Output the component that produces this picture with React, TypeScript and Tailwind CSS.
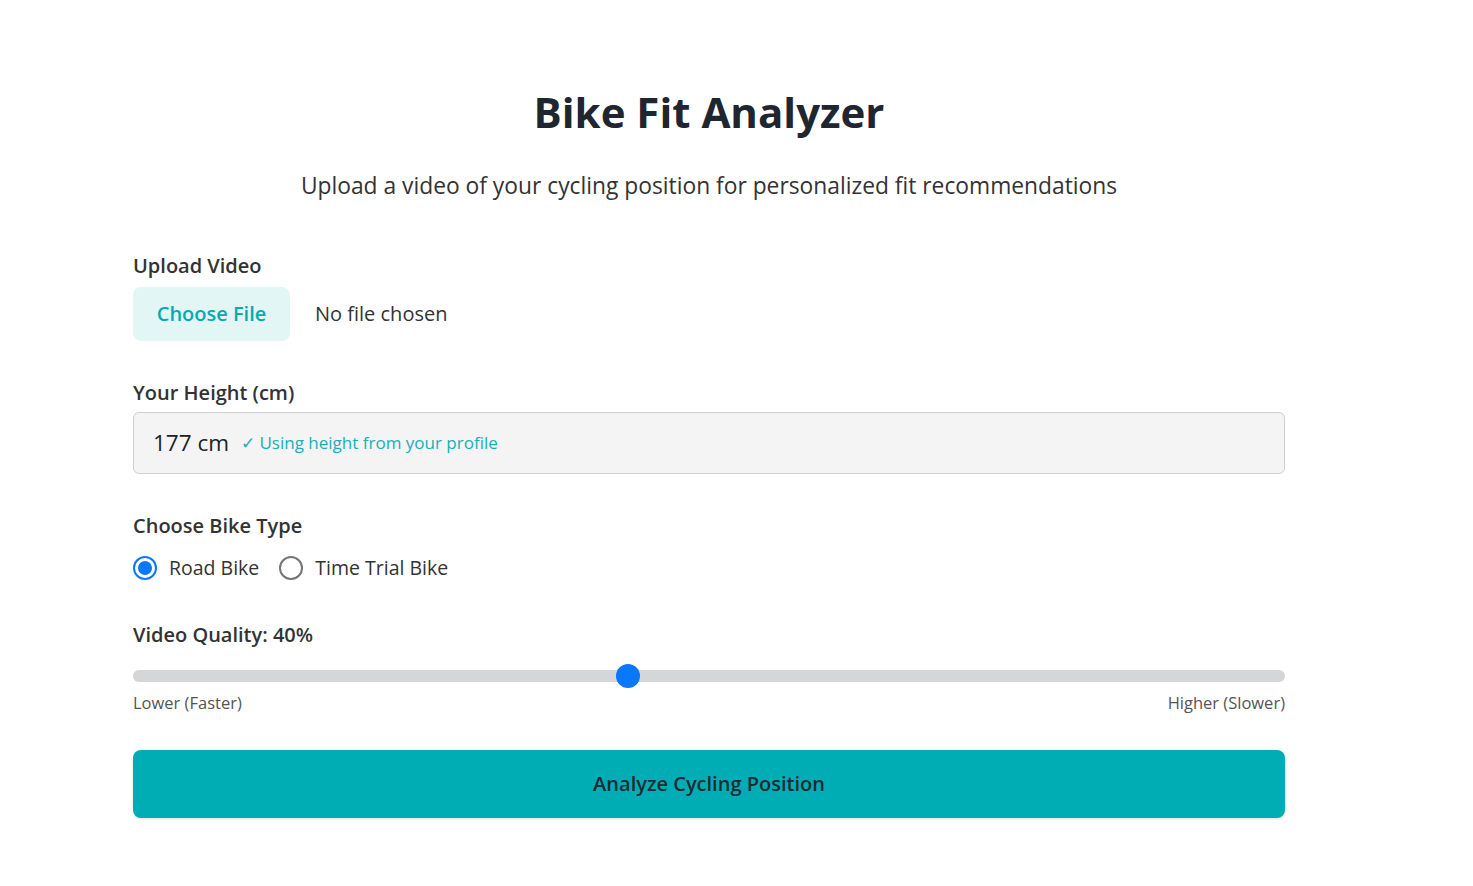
import { useState } from "react";

export default function App() {
  const [bike, setBike] = useState("road");
  const quality = 40;

  return (
    <div className="min-h-screen bg-white font-['Open_Sans',sans-serif] text-[#333]">
      <div className="ml-[133px] w-[1152px] pt-[82px]">
        {/* Header */}
        <h1 className="text-center text-[42px] font-bold leading-[60px] text-[#1f2630]">
          Bike Fit Analyzer
        </h1>
        <p className="mt-[29px] text-center text-[22.8px] leading-[30px] text-[#333]">
          Upload a video of your cycling position for personalized fit recommendations
        </p>

        {/* Upload */}
        <div className="mt-[51px]">
          <label className="block text-[20px] font-semibold leading-[28px] text-[#333]">Upload Video</label>
          <div className="mt-[7px] flex items-center">
            <button className="h-[54px] w-[157px] rounded-[8px] bg-[#e3f6f6] text-[20px] font-semibold text-[#00acb3]">
              Choose File
            </button>
            <span className="ml-[25px] text-[20px] text-[#333]">No file chosen</span>
          </div>
        </div>

        {/* Height */}
        <div className="mt-[38px]">
          <label className="block text-[20px] font-semibold leading-[28px] text-[#333]">Your Height (cm)</label>
          <div className="mt-[5px] flex h-[62px] items-center rounded-[6px] border border-[#cfcfcf] bg-[#f4f4f4] px-[19px]">
            <span className="text-[22.5px] text-[#222]">177 cm</span>
            <span className="ml-[12px] text-[17px] text-[#16b0b8]">✓ Using height from your profile</span>
          </div>
        </div>

        {/* Bike type */}
        <div className="mt-[38px]">
          <label className="block text-[20px] font-semibold leading-[28px] text-[#333]">Choose Bike Type</label>
          <div className="mt-[13px] flex items-center">
            <button onClick={() => setBike("road")} className="flex items-center">
              <span className={`flex h-[24px] w-[24px] items-center justify-center rounded-full border-2 ${bike === "road" ? "border-[#0a77ff]" : "border-[#767676]"}`}>
                {bike === "road" && <span className="h-[14px] w-[14px] rounded-full bg-[#0a77ff]" />}
              </span>
              <span className="ml-[12px] text-[19.5px] text-[#333]">Road Bike</span>
            </button>
            <button onClick={() => setBike("tt")} className="ml-[20px] flex items-center">
              <span className={`flex h-[24px] w-[24px] items-center justify-center rounded-full border-2 ${bike === "tt" ? "border-[#0a77ff]" : "border-[#767676]"}`}>
                {bike === "tt" && <span className="h-[14px] w-[14px] rounded-full bg-[#0a77ff]" />}
              </span>
              <span className="ml-[12px] text-[19.5px] text-[#333]">Time Trial Bike</span>
            </button>
          </div>
        </div>

        {/* Quality */}
        <div className="mt-[39px]">
          <label className="block text-[20px] font-semibold leading-[28px] text-[#333]">Video Quality: {quality}%</label>
          <div className="relative mt-[21px] h-[12px] rounded-full bg-[#d5d6d8]">
            <span className="absolute left-[483px] top-[-6px] h-[24px] w-[24px] rounded-full bg-[#0a77ff]" />
          </div>
          <div className="mt-[10px] flex justify-between text-[16.5px] leading-[22px] text-[#555]">
            <span>Lower (Faster)</span>
            <span>Higher (Slower)</span>
          </div>
        </div>

        {/* Submit */}
        <button className="mt-[36px] flex h-[68px] w-full items-center justify-center rounded-[8px] bg-[#00adb5] text-[20px] font-semibold text-[#1f2a33] shadow-sm">
          Analyze Cycling Position
        </button>
      </div>
    </div>
  );
}
